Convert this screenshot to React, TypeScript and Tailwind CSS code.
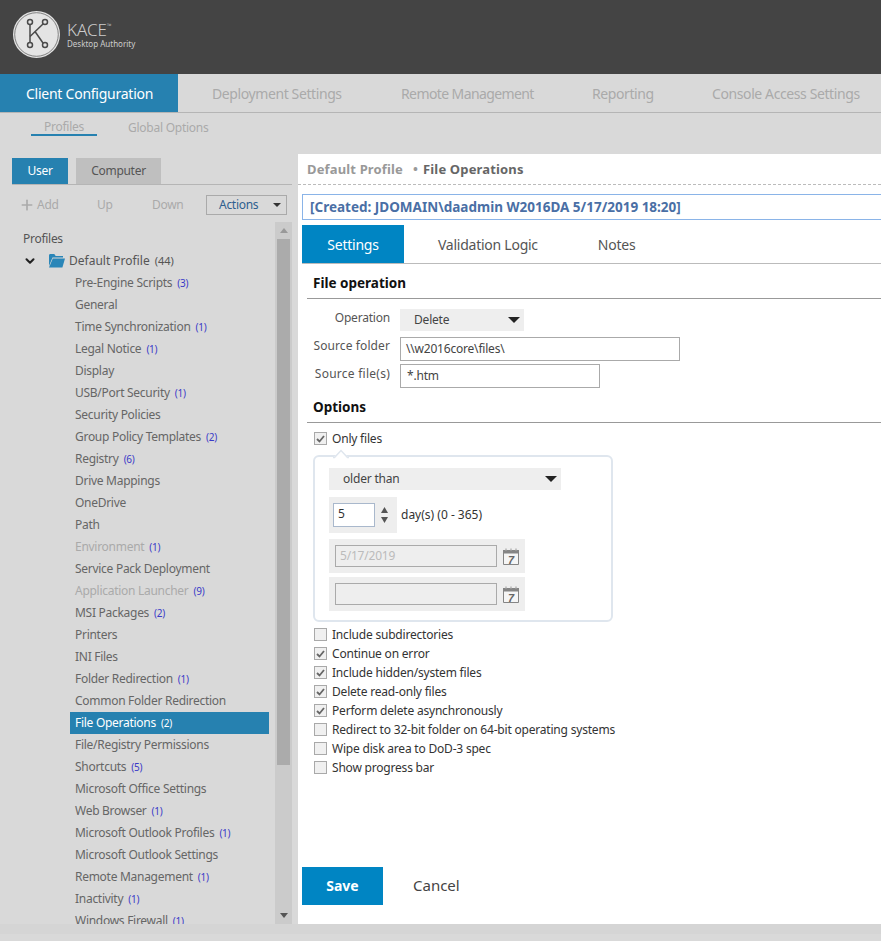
import { ChevronDown, Plus } from "lucide-react";

type TreeItem = {
  name: string;
  count?: number;
  disabled?: boolean;
  active?: boolean;
};

const TREE_ITEMS: TreeItem[] = [
  { name: "Pre-Engine Scripts", count: 3 },
  { name: "General" },
  { name: "Time Synchronization", count: 1 },
  { name: "Legal Notice", count: 1 },
  { name: "Display" },
  { name: "USB/Port Security", count: 1 },
  { name: "Security Policies" },
  { name: "Group Policy Templates", count: 2 },
  { name: "Registry", count: 6 },
  { name: "Drive Mappings" },
  { name: "OneDrive" },
  { name: "Path" },
  { name: "Environment", count: 1, disabled: true },
  { name: "Service Pack Deployment" },
  { name: "Application Launcher", count: 9, disabled: true },
  { name: "MSI Packages", count: 2 },
  { name: "Printers" },
  { name: "INI Files" },
  { name: "Folder Redirection", count: 1 },
  { name: "Common Folder Redirection" },
  { name: "File Operations", count: 2, active: true },
  { name: "File/Registry Permissions" },
  { name: "Shortcuts", count: 5 },
  { name: "Microsoft Office Settings" },
  { name: "Web Browser", count: 1 },
  { name: "Microsoft Outlook Profiles", count: 1 },
  { name: "Microsoft Outlook Settings" },
  { name: "Remote Management", count: 1 },
  { name: "Inactivity", count: 1 },
  { name: "Windows Firewall", count: 1 },
];

const OPTIONS = [
  { label: "Include subdirectories", checked: false },
  { label: "Continue on error", checked: true },
  { label: "Include hidden/system files", checked: true },
  { label: "Delete read-only files", checked: true },
  { label: "Perform delete asynchronously", checked: true },
  { label: "Redirect to 32-bit folder on 64-bit operating systems", checked: false },
  { label: "Wipe disk area to DoD-3 spec", checked: false },
  { label: "Show progress bar", checked: false },
];

const NAV_ITEMS = [
  { label: "Deployment Settings", className: "w-[129px] tracking-[-0.4px]" },
  { label: "Remote Management", className: "w-[131px] tracking-[-0.6px]" },
  { label: "Reporting", className: "w-[60px] tracking-[-0.4px]" },
  { label: "Console Access Settings", className: "w-[148px] tracking-[-0.4px]" },
];

const Logo = () => (
  <svg width="48" height="48" viewBox="0 0 48 48" fill="none">
    <circle cx="23.5" cy="23.5" r="23.5" fill="#e4e4e4" />
    <circle cx="23.5" cy="23.5" r="21.8" fill="#e4e4e4" stroke="#555" strokeWidth="0.7" />
    <g stroke="#4a4a4a" strokeWidth="1.5">
      <path d="M17 13.5V31.5" />
      <path d="M30 13L17 25.5" />
      <path d="M22 20.5L30 32" />
      <circle cx="17" cy="11" r="2.5" fill="#e4e4e4" />
      <circle cx="32" cy="11" r="2.5" fill="#e4e4e4" />
      <circle cx="17" cy="34" r="2.5" fill="#e4e4e4" />
      <circle cx="32" cy="34" r="2.5" fill="#e4e4e4" />
    </g>
  </svg>
);

const Folder = () => (
  <svg width="16" height="14" viewBox="0 0 16 14">
    <path d="M0 1.5C0 .7.5 0 1.3 0h4l1.4 2H14v1.5H3.5L0 12z" fill="#2a86b8" />
    <path d="M3.8 4.5H16l-2.6 9H0z" fill="#2a86b8" />
  </svg>
);

const Caret = () => (
  <svg width="12" height="6" viewBox="0 0 12 6">
    <path d="M0 0h12L6 6z" fill="#222" />
  </svg>
);

const Calendar = () => (
  <svg width="16" height="17" viewBox="0 0 16 17">
    <path d="M.5 2.5h15v14H.5z" fill="#f5f5f5" stroke="#858585" />
    <path d="M0 2h16v3.5H0z" fill="#858585" />
    <path d="M3 .5v2M8 .5v2M13 .5v2" stroke="#b5b5b5" strokeWidth="1.5" />
    <text x="8" y="15.5" textAnchor="middle" fontSize="11" fontWeight="700" fontStyle="italic" fill="#666" fontFamily="Liberation Sans, sans-serif">
      7
    </text>
  </svg>
);

const Checkbox = ({ checked }: { checked: boolean }) => (
  <span className="flex h-[13px] w-[13px] shrink-0 items-center justify-center border border-[#a9a9a9] bg-[#f0f0f0]">
    {checked && (
      <svg width="9" height="8" viewBox="0 0 9 8" fill="none">
        <path d="M1 4l2.5 2.5L8 1" stroke="#666" strokeWidth="1.8" />
      </svg>
    )}
  </span>
);

const CheckRow = ({ label, checked }: { label: string; checked: boolean }) => (
  <div className="flex h-[19px] items-center gap-[5px] whitespace-nowrap pl-[12px] text-[#333]">
    <Checkbox checked={checked} />
    <span>{label}</span>
  </div>
);

const Sidebar = () => (
  <aside className="flex w-[298px] shrink-0 flex-col pl-3 pr-[6px] pt-[4px] tracking-[-0.28px]">
    <div className="flex gap-2 border-b border-[#b5b5b5]">
      <div className="flex h-[26px] w-14 items-center justify-center bg-[#2681b0] text-white">User</div>
      <div className="flex h-[26px] w-[85px] items-center justify-center bg-[#bfbfbf] text-[#555]">Computer</div>
    </div>
    <div className="mt-[10px] flex h-5 items-center text-[#aaa]">
      <Plus size={16} strokeWidth={2.5} className="ml-[7px]" />
      <span className="ml-[2px] w-5">Add</span>
      <span className="ml-10 w-[15px]">Up</span>
      <span className="ml-10 w-[30px]">Down</span>
      <div className="ml-[24px] flex h-5 w-[81px] items-center justify-between border border-[#aaa] pl-3 pr-[5px] text-[#2f5f8f]">
        Actions
        <svg width="8" height="4" viewBox="0 0 8 4">
          <path d="M0 0h8L4 4z" fill="#333" />
        </svg>
      </div>
    </div>
    <div className="mt-[7px] flex min-h-0 flex-1">
      <div className="min-w-0 flex-1 overflow-hidden pl-[11px]">
        <div className="flex h-[28px] items-end pb-[2px] text-[#555]">Profiles</div>
        <div className="flex h-[22px] items-center tracking-normal text-[#555]">
          <ChevronDown size={14} strokeWidth={3.5} color="#222" />
          <span className="ml-[12px]">
            <Folder />
          </span>
          <span className="ml-1">Default Profile</span>
          <span className="ml-[5px] text-[11px]">(44)</span>
        </div>
        <ul>
          {TREE_ITEMS.map((item) => (
            <TreeRow key={item.name} item={item} />
          ))}
        </ul>
      </div>
      <div className="flex w-[17px] shrink-0 flex-col bg-[#cbcbcb] px-[2px]">
        <div className="flex h-[17px] items-center justify-center">
          <svg width="8" height="5" viewBox="0 0 8 5">
            <path d="M4 0l4 5H0z" fill="#999" />
          </svg>
        </div>
        <div className="h-[526px] bg-[#ababab]" />
        <div className="mt-auto flex h-[17px] items-center justify-center">
          <svg width="8" height="5" viewBox="0 0 8 5">
            <path d="M0 0h8L4 5z" fill="#555" />
          </svg>
        </div>
      </div>
    </div>
  </aside>
);

const TreeRow = ({ item }: { item: TreeItem }) => (
  <li
    className={
      item.active
        ? "ml-[47px] flex h-[22px] w-[199px] items-center bg-[#2681b0] pl-[5px] text-white"
        : item.disabled
          ? "ml-[47px] flex h-[22px] items-center pl-[5px] text-[#aaa]"
          : "ml-[47px] flex h-[22px] items-center pl-[5px] text-[#666]"
    }
  >
    {item.name}
    {item.count !== undefined && (
      <span className={item.active ? "ml-[5px] text-[10px]" : "ml-[5px] text-[10px] text-[#3a3ac8]"}>
        ({item.count})
      </span>
    )}
  </li>
);

const FileOperationForm = () => (
  <div className="relative flex-1 pl-[5px] tracking-[-0.2px]">
    <h3 className="flex h-[34px] items-center pl-[6px] pt-1 text-[13.5px] font-bold tracking-normal text-[#111]">File operation</h3>
    <div className="border-t border-[#999]" />
    <div className="mt-[10px] flex h-[22px] items-center">
      <span className="w-[83px] pb-[4px] text-right text-[#555]">Operation</span>
      <div className="ml-[10px] flex h-[22px] w-[124px] items-center justify-between bg-[#eee] pl-[14px] pr-[4px] text-[#444]">
        Delete
        <Caret />
      </div>
    </div>
    <div className="mt-[6px] flex h-6 items-center">
      <span className="w-[83px] whitespace-nowrap pb-[6px] text-right tracking-[0.1px] text-[#555]">Source folder</span>
      <div className="ml-[10px] flex h-6 w-[280px] items-center border border-[#aaa] pl-[5px] text-[#444]">\\w2016core\files\</div>
    </div>
    <div className="mt-[3px] flex h-6 items-center">
      <span className="w-[83px] whitespace-nowrap pb-[4px] text-right tracking-[0.25px] text-[#555]">Source file(s)</span>
      <div className="ml-[10px] flex h-6 w-[200px] items-center border border-[#aaa] pl-[6px] text-[#444]">*.htm</div>
    </div>
    <h3 className="flex h-[34px] items-center pl-[6px] pt-1 text-[13.5px] font-bold tracking-normal text-[#111]">Options</h3>
    <div className="border-t border-[#999]" />
    <div className="-ml-[5px] mt-[6px]">
      <CheckRow label="Only files" checked />
    </div>
    <div className="relative ml-[6px] mt-[7px] h-[167px] w-[300px] rounded-[6px] border-2 border-[#dfe6ee] pl-[14px] pt-[11px]">
      <svg className="absolute -top-[8px] left-[16px]" width="20" height="10" viewBox="0 0 20 10">
        <path d="M0 8h3l7-7 7 7h3v2H0z" fill="#fff" />
        <path d="M2 8.5h1.5L10 1.5l6.5 7H18" fill="none" stroke="#dfe6ee" strokeWidth="1.5" />
      </svg>
      <div className="flex h-[22px] w-[232px] items-center justify-between bg-[#eee] pl-[14px] pr-[4px] text-[#444]">
        older than
        <Caret />
      </div>
      <div className="mt-[7px] flex items-center">
        <div className="flex h-9 w-[68px] items-center bg-[#eee] pl-1">
          <div className="flex h-6 w-[42px] items-center border border-[#a9b8cc] bg-white pb-[2px] pl-1 text-[#333]">5</div>
          <svg className="ml-[5px]" width="9" height="18" viewBox="0 0 9 18">
            <path d="M4.5 1L8 7H1z" fill="#555" />
            <path d="M1 11h7l-3.5 6z" fill="#555" />
          </svg>
        </div>
        <span className="ml-1 tracking-normal text-[#333]">day(s) (0 - 365)</span>
      </div>
      <div className="mt-[6px] flex h-[34px] w-[196px] items-center bg-[#eee] pl-[6px]">
        <div className="flex h-[22px] w-[162px] items-center border border-[#aaa] pl-[4px] text-[#bbb]">5/17/2019</div>
        <span className="ml-[6px]">
          <Calendar />
        </span>
      </div>
      <div className="mt-1 flex h-[34px] w-[196px] items-center bg-[#eee] pl-[6px]">
        <div className="h-[22px] w-[162px] border border-[#aaa]" />
        <span className="ml-[6px]">
          <Calendar />
        </span>
      </div>
    </div>
    <div className="-ml-[5px] mt-[3px]">
      {OPTIONS.map((option) => (
        <CheckRow key={option.label} label={option.label} checked={option.checked} />
      ))}
    </div>
    <div className="absolute bottom-[19px] left-0 flex items-center tracking-normal">
      <button className="h-[38px] w-[81px] bg-[#0085c3] pb-[2px] text-[14px] font-bold text-white">Save</button>
      <button className="ml-[30px] pb-[2px] text-[15px] text-[#444]">Cancel</button>
    </div>
  </div>
);

const MainPanel = () => (
  <main className="flex min-w-0 flex-1 flex-col overflow-hidden bg-white">
    <div className="flex h-[31px] items-center border-b border-dashed border-[#bbb] pl-[9px] pt-[1px] text-[13px] font-bold tracking-[0.15px]">
      <span className="text-[#999]">Default Profile</span>
      <span className="ml-[10px] text-[#999]">•</span>
      <span className="ml-[5px] text-[#666]">File Operations</span>
    </div>
    <div className="-mr-1 ml-1 mt-[9px] flex h-[26px] items-center whitespace-nowrap border border-[#8ab4e8] pl-[7px] text-[13.5px] font-bold text-[#4a6fa5]">
      [Created: JDOMAIN\daadmin W2016DA 5/17/2019 18:20]
    </div>
    <div className="ml-1 mt-[5px] flex h-[39px] items-center border-b border-[#bbb] text-[14px] tracking-[-0.25px]">
      <div className="flex h-[38px] w-[102px] items-center justify-center bg-[#0085c3] text-white">Settings</div>
      <span className="ml-[34px] text-[#555]">Validation Logic</span>
      <span className="ml-[60px] text-[#555]">Notes</span>
    </div>
    <div className="ml-1 flex flex-1 flex-col">
      <FileOperationForm />
    </div>
  </main>
);

export default function App() {
  return (
    <div
      className="flex h-[941px] flex-col overflow-hidden bg-[#d9d9d9] text-[12px]"
      style={{ fontFamily: '"Noto Sans", sans-serif' }}
    >
      <header className="flex h-[74px] shrink-0 items-center bg-[#444] pb-1 pl-[13px]">
        <Logo />
        <div className="ml-[6px] text-[#ccc]">
          <div className="flex h-[18px] items-start text-[17px] font-light leading-[18px]">
            KACE
            <span className="text-[6px] leading-[10px]">™</span>
          </div>
          <div className="text-[8px] leading-[10px]">Desktop Authority</div>
        </div>
      </header>
      <nav className="flex h-[39px] shrink-0 items-center whitespace-nowrap border-b border-[#b5b5b5] text-[14px] tracking-[-0.25px] text-[#aaa]">
        <div className="flex h-[38px] w-[178px] shrink-0 items-center bg-[#2681b0] pl-[26px] text-white">Client Configuration</div>
        <div className="ml-[34px] flex gap-[60px]">
          {NAV_ITEMS.map((item) => (
            <span key={item.label} className={item.className}>
              {item.label}
            </span>
          ))}
        </div>
      </nav>
      <div className="flex h-[41px] shrink-0 pl-[31px] pt-[6px] tracking-[-0.25px] text-[#aaa]">
        <div className="flex h-[17px] w-[66px] items-center justify-center border-b-2 border-[#2681b0]">Profiles</div>
        <span className="ml-[31px] flex h-[17px] items-center">Global Options</span>
      </div>
      <div className="flex h-[770px] shrink-0 overflow-hidden">
        <Sidebar />
        <MainPanel />
      </div>
      <div className="h-[10px] shrink-0 bg-[#d5d5d5]" />
    </div>
  );
}
